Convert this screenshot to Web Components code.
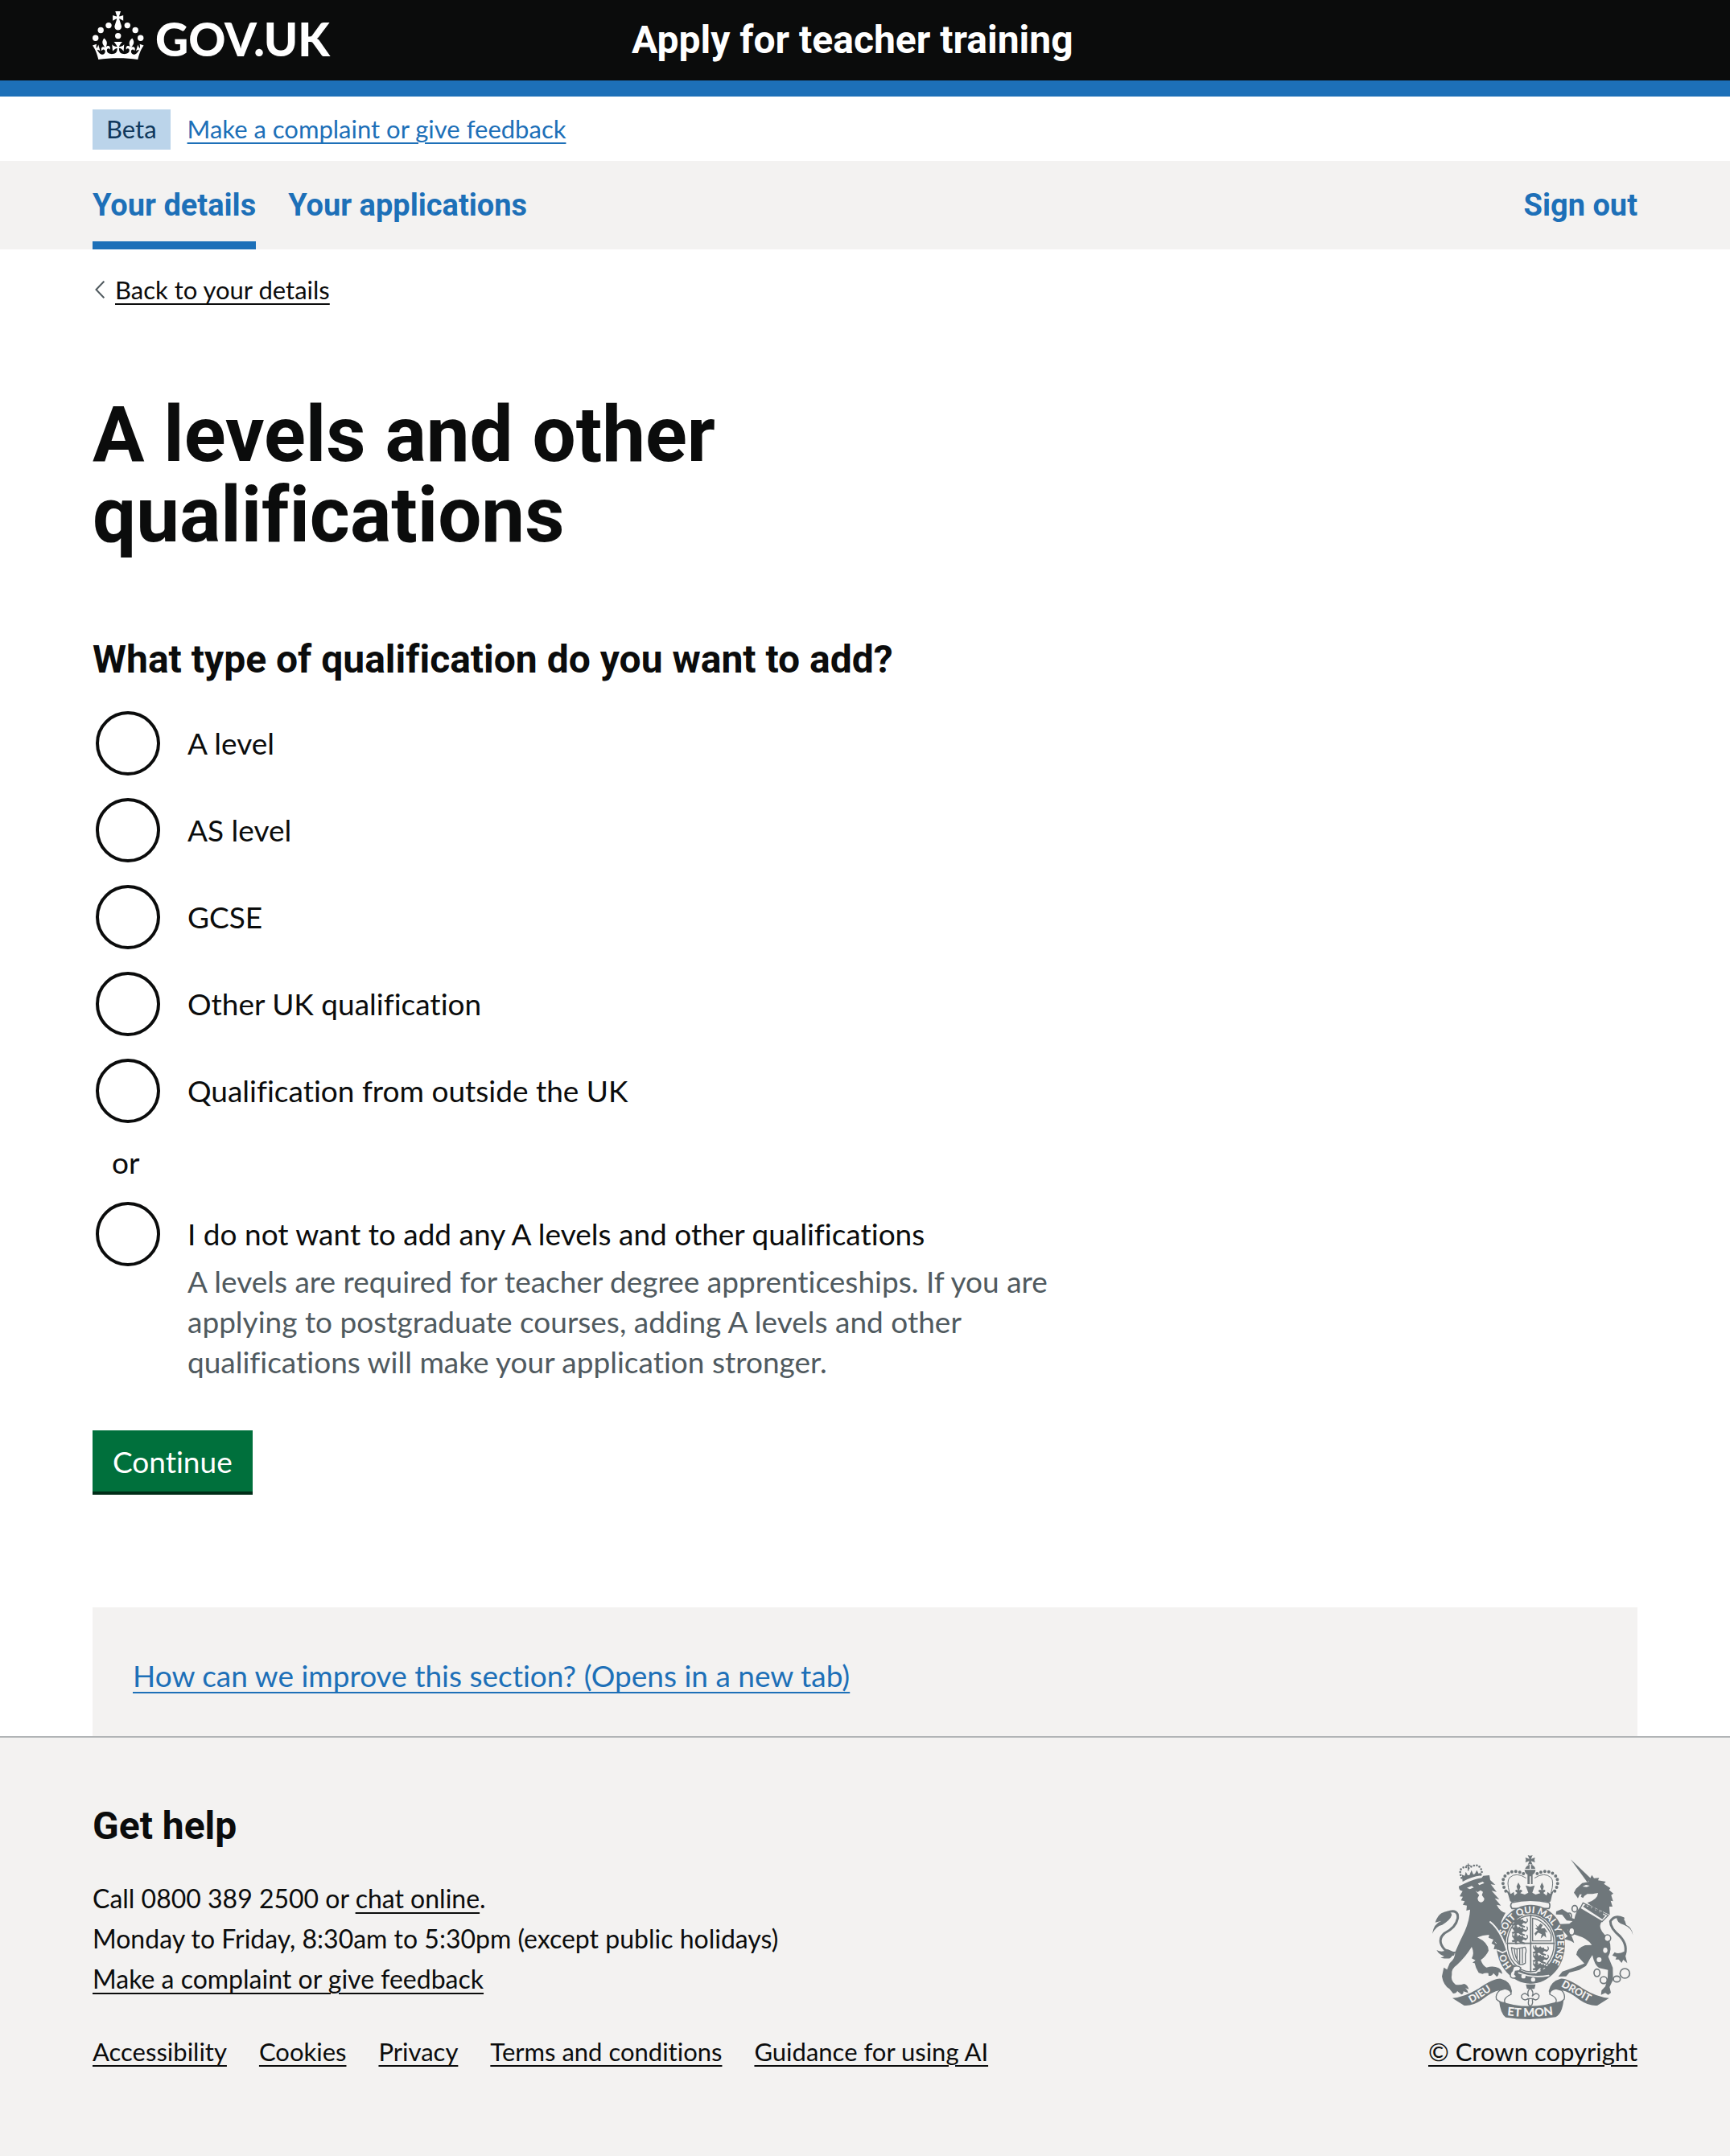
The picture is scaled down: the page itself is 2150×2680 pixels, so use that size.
<!DOCTYPE html>
<html lang="en">
<head>
<meta charset="utf-8">
<meta name="viewport" content="width=device-width, initial-scale=1">
<title>A levels and other qualifications - Apply for teacher training - GOV.UK</title>
<style>
  :root {
    --ink: #0b0c0c;
    --blue: #1d70b8;
    --grey: #f3f2f1;
    --muted: #505a5f;
    --page: min(1920px, calc(100% - 60px));
    --bold-face: Roboto, "Liberation Sans", sans-serif;
  }
  body {
    margin: 0;
    min-height: 100vh;
    display: flex;
    flex-direction: column;
    background: #fff;
    color: var(--ink);
    font-family: Lato, "Liberation Sans", sans-serif;
    font-size: 37px;
    line-height: 50px;
    font-variant-ligatures: none;
  }
  main { width: var(--page); margin: 0 auto; }
  site-footer { flex: 1; }
</style>
</head>
<body>
<service-header>Apply for teacher training</service-header>
<phase-banner phase="Beta">Make a complaint or give feedback</phase-banner>
<primary-nav></primary-nav>
<main>
  <back-link>Back to your details</back-link>
  <page-title>A levels and other qualifications</page-title>
  <qualification-form></qualification-form>
  <feedback-panel>How can we improve this section? (Opens in a new tab)</feedback-panel>
</main>
<site-footer></site-footer>

<script>
const define = (name, markup) => customElements.define(name, class extends HTMLElement {
  constructor() {
    super();
    const template = document.createElement('template');
    template.innerHTML = markup;
    this.attachShadow({ mode: 'open' }).append(template.content.cloneNode(true));
  }
  connectedCallback() {
    this.shadowRoot.querySelectorAll('[data-attr]').forEach(el => {
      el.textContent = this.getAttribute(el.dataset.attr) || '';
    });
  }
});

define('service-header', `
<style>
  :host { display: block; background: var(--ink); color: #fff; border-bottom: 20px solid var(--blue); }
  .inner { width: var(--page); margin: 0 auto; display: grid; grid-template-columns: 1fr 2fr; column-gap: 45px; height: 100px; align-items: center; }
  a { color: inherit; text-decoration: none; white-space: nowrap; }
  .logo { display: flex; align-self: start; gap: 14px; font-size: 57px; line-height: 96px; font-weight: 900; }
  .logo svg { width: 64px; height: 60px; margin-top: 14px; fill: currentColor; }
  .service { font-family: var(--bold-face); font-size: 48px; line-height: 60px; font-weight: 700; }
</style>
<header class="inner">
  <a class="logo" href="#">
    <svg viewBox="0 0 64 60" aria-hidden="true">
      <circle cx="20" cy="17.6" r="3.7"/><circle cx="10.2" cy="23.5" r="3.7"/><circle cx="3.7" cy="33.2" r="3.7"/>
      <circle cx="31.7" cy="30.6" r="3.7"/><circle cx="43.3" cy="17.6" r="3.7"/><circle cx="53.2" cy="23.5" r="3.7"/><circle cx="59.7" cy="33.2" r="3.7"/>
      <path d="M33.1,9.8c.2-.1.3-.3.5-.5l4.6,2.4v-6.8l-4.6,1.5c-.1-.2-.3-.3-.5-.5l1.9-5.9h-6.7l1.9,5.9c-.2.1-.3.3-.5.5l-4.6-1.5v6.8l4.6-2.4c.1.2.3.3.5.5l-2.6,8c-.9,2.8,1.2,5.7,4.1,5.7h0c3,0,5.1-2.9,4.1-5.7l-2.6-8ZM37,37.9s-3.4,3.8-4.1,6.1c2.2,0,4.2-.5,6.4-2.8l-.7,8.5c-2-2.8-4.4-4.1-5.7-3.8.1,3.1.5,6.7,5.8,7.2,3.7.3,6.7-1.5,7-3.8.4-2.6-2-4.3-3.7-1.6-1.4-4.5,2.4-6.1,4.9-3.2-1.9-4.5-1.8-7.7,2.4-10.9,3,4,2.6,7.3-1.2,11.1,2.4-1.3,6.2,0,4,4.6-1.2-2.8-3.7-2.2-4.2.2-.3,1.7.7,3.7,3,4.2,1.9.3,4.7-.9,7-5.9-1.3,0-2.4.7-3.9,1.7l2.4-8c.6,2.3,1.4,3.7,2.2,4.5.6-1.6.5-2.8,0-5.3l5,1.8c-2.6,3.6-5.2,8.7-7.3,17.5-7.4-1.1-15.7-1.7-24.5-1.7h0c-8.8,0-17.1.6-24.5,1.7-2.1-8.9-4.7-13.9-7.3-17.5l5-1.8c-.5,2.5-.6,3.7,0,5.3.8-.8,1.6-2.3,2.2-4.5l2.4,8c-1.5-1-2.6-1.7-3.9-1.7,2.3,5,5.2,6.2,7,5.9,2.3-.4,3.3-2.4,3-4.2-.5-2.4-3-3.1-4.2-.2-2.2-4.6,1.6-6,4-4.6-3.7-3.7-4.2-7.1-1.2-11.1,4.2,3.2,4.3,6.4,2.4,10.9,2.5-2.8,6.3-1.3,4.9,3.2-1.8-2.7-4.1-1-3.7,1.6.3,2.3,3.3,4.1,7,3.8,5.4-.5,5.7-4.2,5.8-7.2-1.3-.2-3.7,1-5.7,3.8l-.7-8.5c2.2,2.3,4.2,2.7,6.4,2.8-.7-2.3-4.1-6.1-4.1-6.1h10.6Z"/>
    </svg>
    <span>GOV.UK</span>
  </a>
  <a class="service" href="#"><slot></slot></a>
</header>`);

define('phase-banner', `
<style>
  :host { display: block; }
  .inner { width: var(--page); margin: 0 auto; padding: 16px 0 14px; display: flex; gap: 21px; font-size: 31px; line-height: 48px; }
  strong { font-weight: 400; background: #bbd4ea; color: #0f385c; padding: 0 17px 2px; }
  a { color: var(--blue); text-decoration: underline 2px; text-underline-offset: 5px; }
</style>
<div class="inner"><strong data-attr="phase"></strong><a href="#"><slot></slot></a></div>`);

define('primary-nav', `
<style>
  :host { display: block; background: var(--grey); font-family: var(--bold-face); font-size: 38px; font-weight: 700; }
  nav { width: var(--page); margin: 0 auto; display: flex; gap: 40px; }
  a { color: var(--blue); text-decoration: none; padding: 30px 0 20px; border-bottom: 10px solid transparent; }
  a[aria-current] { border-color: var(--blue); }
  .end { margin-left: auto; }
</style>
<nav aria-label="Menu">
  <a href="#" aria-current="page">Your details</a>
  <a href="#">Your applications</a>
  <a class="end" href="#">Sign out</a>
</nav>`);

define('back-link', `
<style>
  :host { display: flex; margin-top: 25px; font-size: 31px; }
  a { display: flex; align-items: center; gap: 13px; color: var(--ink); text-decoration: underline 2px; text-underline-offset: 5px; }
  svg { width: 12px; height: 22px; margin-left: 3px; fill: none; stroke: var(--muted); stroke-width: 2; }
</style>
<a href="#"><svg viewBox="0 0 12 22" aria-hidden="true"><path d="M11.300 .700 1.500 11l9.800 10.300"/></svg><span><slot></slot></span></a>`);

define('page-title', `
<style>
  :host { display: block; margin-top: 105px; }
  h1 { margin: 0; max-width: 1250px; font-family: var(--bold-face); font-size: 96px; line-height: 100px; font-weight: 700; }
</style>
<h1><slot></slot></h1>`);

define('qualification-form', `
<style>
  :host { display: block; margin-top: 100px; max-width: 1250px; }
  form { display: block; }
  fieldset { border: 0; margin: 0; padding: 0; min-width: 0; }
  legend { padding: 0; margin-bottom: 34px; font-family: var(--bold-face); font-size: 48px; line-height: 60px; font-weight: 700; }
  .options { display: flex; flex-direction: column; gap: 28px; }
  .option { display: flex; align-items: flex-start; gap: 34px; padding-left: 4px; }
  .text { padding-top: 15px; }
  label { display: block; }
  input { appearance: none; flex: none; width: 80px; height: 80px; margin: 0; border: 4px solid var(--ink); border-radius: 50%; background: #fff; }
  input:checked { background: radial-gradient(var(--ink) 20px, #fff 21px); }
  .divider { margin: 24px; }
  .hint { margin-top: 9px; max-width: 1120px; color: var(--muted); }
  button { display: block; margin: 60px 0 0; padding: 14px 25px 12px; border: 0; border-radius: 0; background: #00703c; box-shadow: 0 4px 0 #002d18; color: #fff; font: inherit; font-variant-ligatures: none; }
</style>
<form>
  <fieldset>
    <legend>What type of qualification do you want to add?</legend>
    <div class="options">
      <div class="option"><input type="radio" name="type" id="a"><div class="text"><label for="a">A level</label></div></div>
      <div class="option"><input type="radio" name="type" id="as"><div class="text"><label for="as">AS level</label></div></div>
      <div class="option"><input type="radio" name="type" id="gcse"><div class="text"><label for="gcse">GCSE</label></div></div>
      <div class="option"><input type="radio" name="type" id="uk"><div class="text"><label for="uk">Other UK qualification</label></div></div>
      <div class="option"><input type="radio" name="type" id="abroad"><div class="text"><label for="abroad">Qualification from outside the UK</label></div></div>
    </div>
    <div class="divider">or</div>
    <div class="option">
      <input type="radio" name="type" id="none" aria-describedby="none-hint">
      <div class="text">
        <label for="none">I do not want to add any A levels and other qualifications</label>
        <div class="hint" id="none-hint">A levels are required for teacher degree apprenticeships. If you are applying to postgraduate courses, adding A levels and other qualifications will make your application stronger.</div>
      </div>
    </div>
  </fieldset>
  <button type="button">Continue</button>
</form>`);

define('feedback-panel', `
<style>
  :host { display: block; margin-top: 144px; padding: 60px 50px 50px; background: var(--grey); }
  a { color: var(--blue); text-decoration: underline 2px; text-underline-offset: 6px; }
</style>
<a href="#"><slot></slot></a>`);

define('royal-arms', `
<style>
  :host { display: block; }
  svg { display: block; width: 250px; height: 204px; overflow: visible; }
  .f { fill: #6f777b; }
  .l { fill: none; stroke: #6f777b; stroke-linecap: round; stroke-linejoin: round; }
  .w { fill: var(--grey); }
  .wl { fill: none; stroke: var(--grey); stroke-linecap: round; }
  .beads { fill: none; stroke: #6f777b; stroke-linecap: round; }
  text { fill: var(--grey); font-family: Lato, "Liberation Sans", sans-serif; font-weight: 900; }
</style>
<svg viewBox="117 47 750 612" role="img" aria-label="Royal coat of arms">
  <defs>
    <path id="ring" d="M414 462A100 116 0 0 1 384 379A100 116 0 0 1 584 379A100 116 0 0 1 520 487"/>
    <path id="left" d="M262 599Q305 577 360 535"/>
    <path id="right" d="M597 536Q640 559 715 603"/>
    <path id="foot" d="M396 645Q484 655 574 642"/>
    <g id="beast"><path d="M2 8Q12 2 22 7L29 2 34 8 42 6 44 12 54 15 54 22 43 20 38 27 50 32 49 37 34 34 24 26 18 29 23 37 14 38 11 28 3 30 0 24 10 20Z"/><path class="l" stroke-width="4" d="M51 20Q63 14 57 4M4 8V1M12 6V0"/></g>
    <g id="beasts"><use href="#beast" y="0"/><use href="#beast" y="31"/><use href="#beast" y="62"/></g>
    <g id="pattee"><path d="M-9-18Q0-14 9-18L3-4 18-9Q14 0 18 9L3 4 9 18Q0 14-9 18L-3 4-18 9Q-14 0-18-9L-3-4Z"/></g>
  </defs>

  <!-- lion -->
  <g class="f">
    <path d="M230 146Q262 128 299 123L298 112 290 116 283 103 276 117 270 119 263 103 256 121 249 122 242 109 238 124 227 120Z"/>
    <path d="M216 163L238 153Q272 137 301 132L307 124 330 122 333 140 352 158 335 156 357 184 338 180 367 212 350 208 373 235 357 232Q370 258 390 262L380 281Q365 305 381 340L395 400 379 409 374 400 365 410 358 397 346 398 350 383 338 376 345 362 327 355 329 344Q304 345 285 354Q326 373 327 403Q318 423 298 438Q304 459 319 466Q345 458 364 468Q376 475 378 490L365 483Q366 494 358 501L345 487Q340 499 327 497L326 487Q313 486 304 490L290 486Q278 467 275 450L267 448 278 439 264 432Q275 413 264 389Q241 427 208 457Q187 471 190 492Q184 516 204 530Q220 533 236 527 250 532 253 547L240 543Q251 552 251 561L233 555Q234 564 226 567L210 554Q207 563 195 563L181 546Q158 531 153 499L160 466 172 474 182 450Q204 430 202 409Q219 369 238 331Q256 290 258 250L244 254 246 235 231 232 238 219 224 216 231 202 219 201 230 181Q215 179 216 163Z"/>
    <path d="M117 340Q122 303 151 292L128 298Q137 272 151 264 183 246 190 270 184 290 154 307 130 312 117 340Z"/>
    <path d="M133 401Q155 413 174 398L195 407 207 407 183 432Q171 434 148 430L162 424Q143 419 133 401Z"/>
  </g>
  <path class="l" stroke-width="9" d="M172 261Q215 246 212 282Q205 318 163 338Q132 364 163 399L195 417"/>
  <path class="beads" stroke-width="8" stroke-dasharray="0 11" d="M226 132Q215 103 229 95T251 97Q282 75 295 93T296 122"/>
  <path class="l" stroke-width="4" d="M251 80V104M244 86H258"/>
  <path class="w" d="M246 169L264 162 272 168 257 174ZM287 153L305 146 311 151 292 159ZM278 180L286 185 297 178 306 184 302 196 311 209Q310 222 298 223 286 221 286 207L292 196Z"/>
  <path class="wl" stroke-width="3" d="M372 348L381 384M351 372L368 386"/>

  <!-- unicorn -->
  <g class="f">
    <path d="M633 63L709 135 695 148Z"/>
    <path d="M645 187L653 172 676 151 699 147 712 121 720 133 739 132 735 141 764 146 757 154 781 170 776 177 792 190 784 196 791 219 782 217 789 239 777 239 779 270 758 260 714 239 695 225Q734 212 735 188L714 192 695 192 684 199 679 207 671 202 674 193 667 193 660 208 653 198Z"/>
    <path d="M668 242L750 294Q735 311 750 332L777 365Q788 398 773 426L790 467 791 512 778 539 783 560 773 568 762 561 746 568 748 552 762 537 771 504 772 475 739 468Q722 458 714 420Q705 432 698 447L690 460 665 475 628 485 616 499 587 500 602 481 645 466 684 451 654 418Q657 393 687 383L712 382Q692 356 661 348L640 340 621 324 636 348 643 365 646 375 634 367 609 360 622 349 599 323 593 304 628 303 640 293 618 291 601 269 578 268 579 257 601 248 628 265 633 280 647 285Q651 258 668 242Z"/>
    <path d="M865 345Q861 319 832 307 804 302 804 276 833 272 840 307Q862 316 865 345Z"/>
    <path d="M797 409Q810 418 833 406L844 450 829 437 823 449 812 436 800 436 804 427 788 421Z"/>
  </g>
  <path class="l" stroke-width="9" d="M829 283Q797 267 781 294 780 318 817 350 849 385 832 425"/>
  <path class="w" stroke="#6f777b" stroke-width="4" d="M679 225L773 272 750 295 668 246Z"/>
  <path class="f" d="M679 239L690 229 695 240 706 233 709 246 721 238 725 253 738 247 740 261 753 256 754 270 763 272 751 286Z"/>
  <path class="w" d="M677 164L690 158 704 161 693 166Z"/>
  <g class="l" stroke-width="5">
    <ellipse cx="648" cy="247" rx="10" ry="12"/><ellipse cx="628" cy="275" rx="8" ry="12"/>
    <ellipse cx="637" cy="331" rx="11" ry="14"/><ellipse cx="770" cy="357" rx="12" ry="13"/>
    <ellipse cx="731" cy="486" rx="11" ry="14"/><circle cx="756" cy="513" r="13"/>
    <ellipse cx="805" cy="509" rx="13" ry="11"/><circle cx="835" cy="488" r="18"/>
  </g>
  <g class="w"><ellipse cx="762" cy="402" rx="8" ry="10"/><circle cx="739" cy="437" r="9"/><ellipse cx="770" cy="357" rx="9" ry="10"/><ellipse cx="637" cy="331" rx="8" ry="11"/></g>

  <!-- crown -->
  <g class="f">
    <use href="#pattee" x="482" y="65"/>
    <path d="M463 98Q469 85 480 82V98ZM485 98V82Q499 86 501 98ZM461 102H502Q501 116 491 120V155H485V126H480V155H472V120Q462 116 461 102Z"/>
    <path d="M391 174L410 192 421 184 423 198 434 188 426 181Q429 173 436 178L431 164 438 149 446 164 441 178Q449 173 453 181L445 189 462 194 475 187 465 160 482 165 499 160 490 187 502 194 520 189 512 181Q516 173 524 178L519 164 526 149 533 164 529 178Q536 173 539 181L531 188 543 198 547 184 556 192 572 174Q562 197 558 220L550 222Q483 208 413 222L407 219Q402 194 391 174Z"/>
  </g>
  <path class="beads" stroke-width="12" stroke-dasharray="0 15" d="M391 181Q369 143 393 119Q424 96 464 120"/>
  <path class="beads" stroke-width="12" stroke-dasharray="0 15" d="M574 181Q596 143 572 119Q541 96 501 120"/>
  <path class="l" stroke-width="3" d="M405 187Q393 145 405 131Q430 108 466 132M560 187Q572 145 560 131Q535 108 499 132"/>
  <path class="w" stroke="#6f777b" stroke-width="5" d="M414 224Q482 207 552 224 559 234 552 246H414Q405 234 414 224Z"/>

  <!-- garter -->
  <ellipse class="f" cx="484" cy="379" rx="128" ry="147"/>
  <ellipse class="w" cx="484" cy="378" rx="93" ry="111"/>
  <path class="wl" stroke-width="6" d="M333 296Q372 327 395 401"/>
  <path class="wl" stroke-width="5" d="M361 402L379 411 394 403"/>
  <ellipse class="l" stroke-width="4" cx="484" cy="377" rx="87" ry="105"/>
  <path class="l" stroke-width="5" d="M484 271V482M396 376H572"/>
  <g class="f"><use href="#beasts" x="413" y="280"/><use href="#beasts" x="491" y="385"/></g>
  <g class="l" stroke-width="4">
    <path d="M491 282Q535 290 560 342V367H491Z"/>
    <path d="M412 392L430 397 463 390Q470 402 464 415V450Q443 462 434 447Q417 438 412 392ZM423 397Q424 429 443 450M433 398V434M443 397V448M453 395V449"/>
  </g>
  <path class="f" d="M500 304L511 314 520 302 529 308 522 321 536 319 547 336 538 333 542 355 533 347 521 358 525 342 511 336 502 348 498 339 510 327 500 321 509 317Z"/>
  <text font-size="35"><textPath href="#ring">HO <tspan dx="58">SOIT QUI MAL Y PENSE</tspan></textPath></text>
  <path class="f" d="M420 455L450 478Q495 497 548 491Q525 527 479 525Q432 516 406 492Z"/>
  <path class="wl" stroke-width="5" d="M439 486Q490 507 551 496M503 486L519 471"/>
  <path class="w" stroke="#6f777b" stroke-width="4" d="M420 464Q435 456 447 467L442 478 427 480 424 492 432 499Q421 512 409 501Q406 486 415 479Z"/>
  <circle class="w" cx="457" cy="499" r="8"/><circle class="w" cx="493" cy="511" r="8"/>

  <!-- motto ribbon -->
  <g class="f">
    <path d="M192 580Q236 577 289 545Q348 505 373 508Q410 517 414 554L411 566Q391 546 369 551Q340 555 300 588Q266 611 236 608Z"/>
    <path d="M776 580Q732 577 679 545Q620 505 595 508Q558 517 551 554L555 566Q577 546 599 551Q628 555 668 588Q702 611 732 608Z"/>
    <path d="M366 589Q480 634 607 585Q602 639 577 651Q482 667 391 652Q371 638 366 589Z"/>
    <path d="M466 529H502L498 546H470Z"/>
  </g>
  <g class="w" stroke="#6f777b" stroke-width="4">
    <path d="M369 551Q351 566 356 584Q369 598 388 597Q380 580 411 566Q412 550 388 545Z"/>
    <path d="M599 551Q614 566 609 584Q597 598 577 597Q587 580 555 566Q554 550 578 545Z"/>
    <path d="M482 543Q498 559 489 574Q504 554 515 570Q517 583 502 587L490 583 491 598Q489 608 483 609Q475 608 475 598L477 583 463 587Q447 583 450 570Q463 554 477 574Q467 558 482 543ZM470 582H496"/>
  </g>
  <text font-size="38"><textPath href="#left">DIEU</textPath></text>
  <text font-size="38"><textPath href="#right">DROIT</textPath></text>
  <text font-size="44"><textPath href="#foot">ET MON</textPath></text>
</svg>`);

define('site-footer', `
<style>
  :host { display: block; background: var(--grey); border-top: 2px solid #b1b4b6; font-size: 31px; }
  footer { width: var(--page); margin: 0 auto; padding: 80px 0 105px; display: flex; flex-wrap: wrap; justify-content: space-between; align-items: flex-end; gap: 40px; }
  h2 { margin: 0 0 35px; font-family: var(--bold-face); font-size: 48px; line-height: 60px; font-weight: 700; }
  p { margin: 0 0 40px; font-size: 32px; }
  a { color: var(--ink); text-decoration: underline 2px; text-underline-offset: 5px; }
  ul { display: flex; flex-wrap: wrap; column-gap: 40px; list-style: none; margin: 0; padding: 0; }
  .rights { display: flex; flex-direction: column; align-items: center; gap: 15px; }
</style>
<footer>
  <div>
    <h2>Get help</h2>
    <p>Call 0800 389 2500 or <a href="#">chat online</a>.<br>Monday to Friday, 8:30am to 5:30pm (except public holidays)<br><a href="#">Make a complaint or give feedback</a></p>
    <ul>
      <li><a href="#">Accessibility</a></li>
      <li><a href="#">Cookies</a></li>
      <li><a href="#">Privacy</a></li>
      <li><a href="#">Terms and conditions</a></li>
      <li><a href="#">Guidance for using AI</a></li>
    </ul>
  </div>
  <div class="rights">
    <royal-arms></royal-arms>
    <a href="#">© Crown copyright</a>
  </div>
</footer>`);
</script>
</body>
</html>
